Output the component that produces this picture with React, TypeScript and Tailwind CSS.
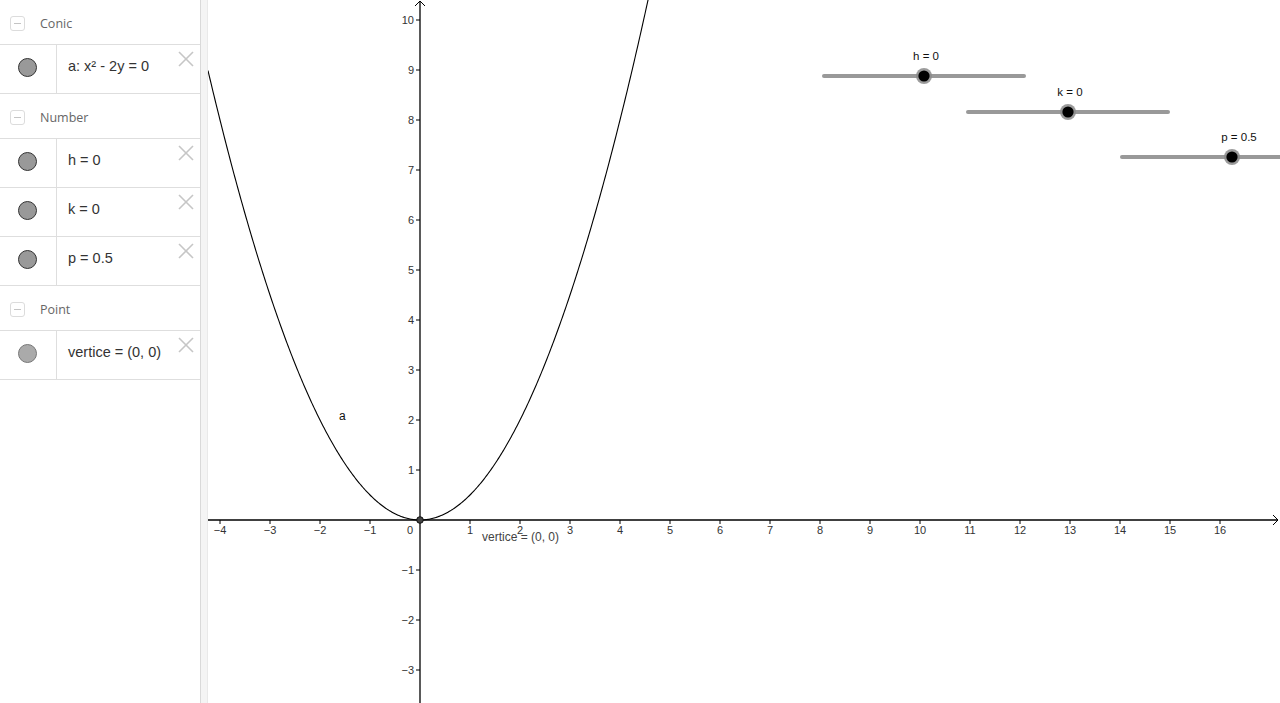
import React from "react";

type Item = { text: React.ReactNode; light?: boolean };
type Group = { title: string; items: Item[] };

const groups: Group[] = [
  { title: "Conic", items: [{ text: <>a: x² - 2y = 0</> }] },
  {
    title: "Number",
    items: [{ text: "h = 0" }, { text: "k = 0" }, { text: "p = 0.5" }],
  },
  { title: "Point", items: [{ text: "vertice = (0, 0)", light: true }] },
];

function CloseX() {
  return (
    <svg width="18" height="18" viewBox="0 0 18 18" className="shrink-0">
      <line x1="2" y1="2" x2="16" y2="16" stroke="#c6c6c6" strokeWidth="1.6" />
      <line x1="16" y1="2" x2="2" y2="16" stroke="#c6c6c6" strokeWidth="1.6" />
    </svg>
  );
}

function Header({ title }: { title: string }) {
  return (
    <div className="h-[45px] border-b border-[#dedede] flex items-center pl-[10px] gap-[15px] pt-[2px]">
      <div className="w-[15px] h-[15px] rounded-[3px] border border-[#dcdcdc] flex items-center justify-center">
        <div className="w-[7px] h-px bg-[#c4c4c4]" />
      </div>
      <span className="text-[12.5px] text-[#666] font-['Open_Sans',sans-serif] leading-none pt-[2px]">{title}</span>
    </div>
  );
}

function Row({ item }: { item: Item }) {
  return (
    <div className="h-[49px] border-b border-[#dedede] flex">
      <div className="w-[57px] border-r border-[#dedede] flex items-center justify-center pr-px pb-[4px]">
        <div
          className={
            item.light
              ? "w-[19px] h-[19px] rounded-full bg-[#aaaaaa] border border-[#777]"
              : "w-[19px] h-[19px] rounded-full bg-[#999999] border border-[#333]"
          }
        />
      </div>
      <div className="flex-1 flex items-center pl-[11px] text-[14.5px] text-[#333] font-['Liberation_Sans',sans-serif] pb-[4px]">
        {item.text}
      </div>
      <div className="pt-[5px] pr-[5px]">
        <CloseX />
      </div>
    </div>
  );
}

const OX = 420;
const OY = 520;
const U = 50;

function parabola() {
  const pts: string[] = [];
  for (let px = 208; px <= 660; px += 1) {
    const x = (px - OX) / U;
    const y = (x * x) / 2;
    const py = OY - y * U;
    pts.push(`${px},${py.toFixed(2)}`);
  }
  return "M" + pts.join(" L");
}

function Slider({ x1, x2, y, knob, label, lx }: { x1: number; x2: number; y: number; knob: number; label: string; lx: number }) {
  return (
    <g>
      <line x1={x1} y1={y} x2={x2} y2={y} stroke="#999" strokeWidth="4" strokeLinecap="round" />
      <circle cx={knob} cy={y} r="8" fill="#8a8a8a" opacity="0.85" />
      <circle cx={knob} cy={y} r="5.6" fill="#000" />
      <text x={lx} y={y - 16} textAnchor="middle" fontSize="11.5" fill="#111" fontFamily="Liberation Sans, Arial, sans-serif">
        {label}
      </text>
    </g>
  );
}

function Graph() {
  const xs: number[] = [];
  for (let i = -4; i <= 16; i++) if (i !== 0) xs.push(i);
  const ys: number[] = [];
  for (let i = -3; i <= 10; i++) if (i !== 0) ys.push(i);
  const fmt = (n: number) => (n < 0 ? "\u2212" + Math.abs(n) : String(n));
  return (
    <svg width="1072" height="703" viewBox="208 0 1072 703" className="block">
      <g fontFamily="Liberation Sans, Arial, sans-serif" fontSize="11" fill="#333">
        <line x1="208" y1={OY} x2="1278" y2={OY} stroke="#000" strokeWidth="1.3" />
        <polyline points="1273,515 1278,520 1273,525" fill="none" stroke="#000" strokeWidth="1" />
        <line x1={OX} y1="703" x2={OX} y2="1" stroke="#000" strokeWidth="1.3" />
        <polyline points="415,6 420,1 425,6" fill="none" stroke="#000" strokeWidth="1" />
        {xs.map((i) => (
          <g key={"x" + i}>
            <line x1={OX + i * U} y1={OY} x2={OX + i * U} y2={OY + 4} stroke="#000" strokeWidth="1" />
            <text x={OX + i * U} y={OY + 14} textAnchor="middle">
              {fmt(i)}
            </text>
          </g>
        ))}
        <text x={OX - 10} y={OY + 14} textAnchor="middle">0</text>
        {ys.map((i) => (
          <g key={"y" + i}>
            <line x1={OX - 4} y1={OY - i * U} x2={OX} y2={OY - i * U} stroke="#000" strokeWidth="1" />
            <text x={OX - 6} y={OY - i * U + 4} textAnchor="end">
              {fmt(i)}
            </text>
          </g>
        ))}
        <path d={parabola()} fill="none" stroke="#000" strokeWidth="1.1" />
        <text x="339" y="420" fill="#111" fontSize="12">a</text>
        <circle cx={OX} cy={OY} r="3.3" fill="#444" stroke="#111" strokeWidth="1" />
        <text x="482" y="541" fill="#444" fontSize="12">vertice = (0, 0)</text>
        <Slider x1={824} x2={1024} y={76} knob={924} label="h = 0" lx={926} />
        <Slider x1={968} x2={1168} y={112} knob={1068} label="k = 0" lx={1070} />
        <Slider x1={1122} x2={1322} y={157} knob={1232} label="p = 0.5" lx={1239} />
      </g>
    </svg>
  );
}

export default function App() {
  return (
    <div className="flex w-[1280px] h-[703px] bg-white overflow-hidden">
      <div className="w-[200px] shrink-0 bg-white">
        {groups.map((g) => (
          <div key={g.title}>
            <Header title={g.title} />
            {g.items.map((it, idx) => (
              <Row key={idx} item={it} />
            ))}
          </div>
        ))}
      </div>
      <div className="w-[8px] shrink-0 bg-[#f4f4f4] border-l border-[#d9d9d9] border-r border-r-[#e9e9e9]" />
      <div className="flex-1 overflow-hidden">
        <Graph />
      </div>
    </div>
  );
}
